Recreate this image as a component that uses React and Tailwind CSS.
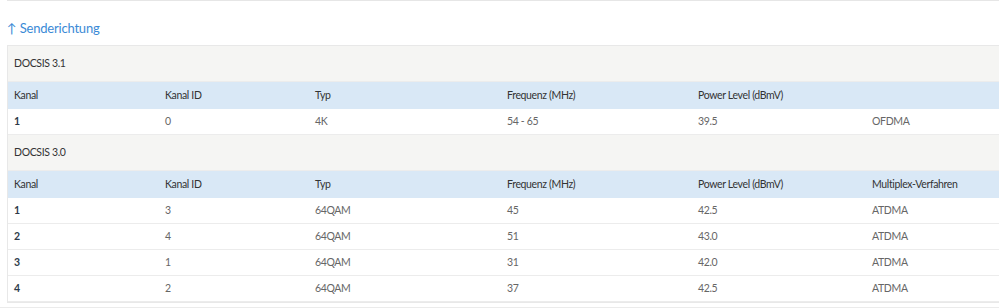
import React from "react";

const cols = ["w-[151px]", "w-[150px]", "w-[192px]", "w-[191px]", "w-[174px]", "flex-1"];

const head = ["Kanal", "Kanal ID", "Typ", "Frequenz (MHz)", "Power Level (dBmV)"];

const groups = [
  {
    name: "DOCSIS 3.1",
    last: "",
    rows: [["1", "0", "4K", "54 - 65", "39.5", "OFDMA"]],
  },
  {
    name: "DOCSIS 3.0",
    last: "Multiplex-Verfahren",
    rows: [
      ["1", "3", "64QAM", "45", "42.5", "ATDMA"],
      ["2", "4", "64QAM", "51", "43.0", "ATDMA"],
      ["3", "1", "64QAM", "31", "42.0", "ATDMA"],
      ["4", "2", "64QAM", "37", "42.5", "ATDMA"],
    ],
  },
];

export default function App() {
  return (
    <div
      className="h-[308px] w-[999px] overflow-hidden bg-white"
      style={{ fontFamily: "Lato, 'Liberation Sans', sans-serif" }}
    >
      <div className="ml-[7px] h-px bg-[#e6e6e6]" />
      <div className="pl-[7px] pt-[18px] pb-[8px] text-[13px] leading-[18px] tracking-[-0.2px]">
        <a href="#" className="text-[#3b8ad6]">
          ↑ Senderichtung
        </a>
      </div>
      <div className="ml-[7px] w-[1010px] border border-[#e8e8e8] text-[10.5px] tracking-[-0.35px]">
        {groups.map((g) => (
          <div key={g.name}>
            <div className="flex h-[36px] items-center border-b border-[#ececec] bg-[#f5f5f3] px-[6px] text-[#333]">
              {g.name}
            </div>
            <div className="flex h-[27px] items-center bg-[#d9e8f6] px-[6px] text-[#333]">
              {[...head, g.last].map((h, i) => (
                <div key={i} className={cols[i]}>
                  {h}
                </div>
              ))}
            </div>
            {g.rows.map((r, ri) => (
              <div
                key={ri}
                className="flex h-[26px] items-center border-b border-[#ececec] bg-white px-[6px] text-[#666]"
              >
                {r.map((c, i) => (
                  <div
                    key={i}
                    className={`${cols[i]} ${i === 0 ? "font-bold text-[#2d3a4a]" : ""}`}
                  >
                    {c}
                  </div>
                ))}
              </div>
            ))}
          </div>
        ))}
      </div>
      <div className="mt-[4px] h-[10px] bg-[#ebebeb]" />
    </div>
  );
}
